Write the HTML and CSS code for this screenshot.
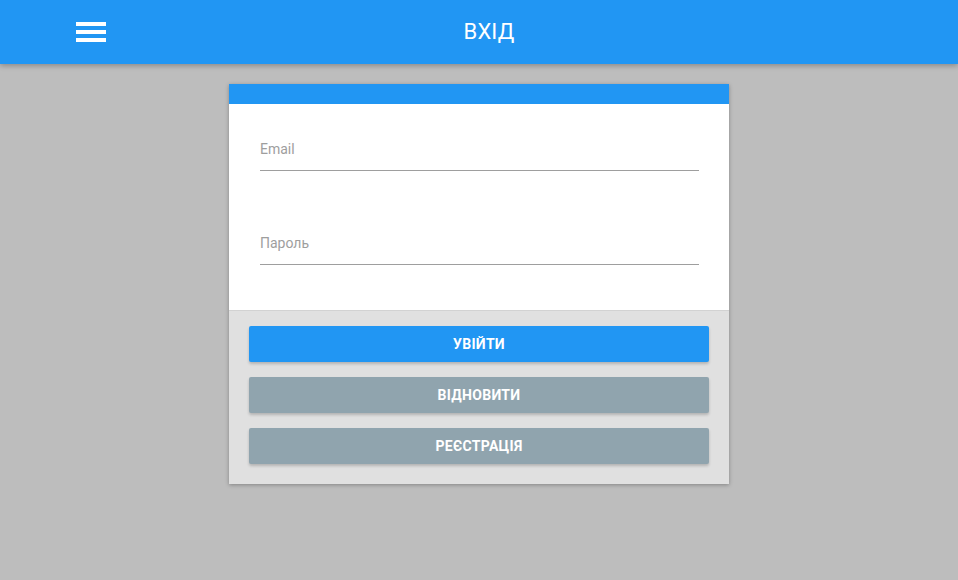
FILE: index.html
```html
<!DOCTYPE html>
<html lang="uk">
<head>
<meta charset="utf-8">
<title>Вхід</title>
<link rel="stylesheet" href="styles.css">
</head>
<body>
<header class="appbar">
  <button class="menu-btn" aria-label="Меню">
    <svg width="30" height="20" viewBox="0 0 30 20"><rect x="0" y="0" width="30" height="4" fill="#fff"/><rect x="0" y="8" width="30" height="4" fill="#fff"/><rect x="0" y="16" width="30" height="4" fill="#fff"/></svg>
  </button>
  <h1 class="title">ВХІД</h1>
</header>
<main class="content">
  <section class="card">
    <div class="card-strip"></div>
    <div class="card-body">
      <div class="field"><span class="field-label">Email</span></div>
      <div class="field field-gap"><span class="field-label">Пароль</span></div>
    </div>
    <div class="card-actions">
      <button class="btn btn-primary">Увійти</button>
      <button class="btn btn-secondary">Відновити</button>
      <button class="btn btn-secondary">Реєстрація</button>
    </div>
  </section>
</main>
</body>
</html>
```
FILE: styles.css
```css
* { box-sizing: border-box; }
html, body { margin: 0; padding: 0; }
body {
  background: #bdbdbd;
  font-family: Roboto, "Noto Sans", sans-serif;
  min-height: 580px;
}
.appbar {
  height: 64px;
  background: #2196f3;
  display: flex;
  align-items: center;
  justify-content: center;
  padding-left: 20px;
  position: relative;
  box-shadow: 0 2px 5px rgba(0,0,0,0.26);
}
.menu-btn {
  position: absolute;
  left: 76px;
  top: 22px;
  width: 30px;
  height: 20px;
  padding: 0;
  border: 0;
  background: none;
  display: block;
}
.menu-btn svg { display: block; }
.title {
  margin: 0;
  color: #fff;
  font-weight: 400;
  font-size: 22px;
  line-height: 64px;
  letter-spacing: 0.2px;
}
.content {
  display: flex;
  justify-content: center;
  padding-top: 20px;
}
.card {
  width: 500px;
  background: #fff;
  box-shadow: 0 1px 4px rgba(0,0,0,0.3);
}
.card-strip {
  height: 20px;
  background: #2196f3;
}
.card-body {
  padding: 35px 30px 45px 31px;
}
.field {
  border-bottom: 1px solid #9e9e9e;
  padding-bottom: 11px;
  line-height: 20px;
}
.field-gap { margin-top: 62px; }
.field-label {
  font-size: 14px;
  color: #9e9e9e;
}
.card-actions {
  background: #e0e0e0;
  border-top: 1px solid #d2d2d2;
  padding: 15px 20px 20px;
  display: flex;
  flex-direction: column;
  gap: 15px;
}
.btn {
  height: 36px;
  border: 0;
  border-radius: 2px;
  color: #fff;
  font-family: Roboto, "Noto Sans", sans-serif;
  font-weight: 700;
  font-size: 14px;
  text-transform: uppercase;
  letter-spacing: 0.3px;
  box-shadow: 0 2px 3px rgba(0,0,0,0.2);
}
.btn-primary { background: #2196f3; }
.btn-secondary { background: #90a4ae; }
```
